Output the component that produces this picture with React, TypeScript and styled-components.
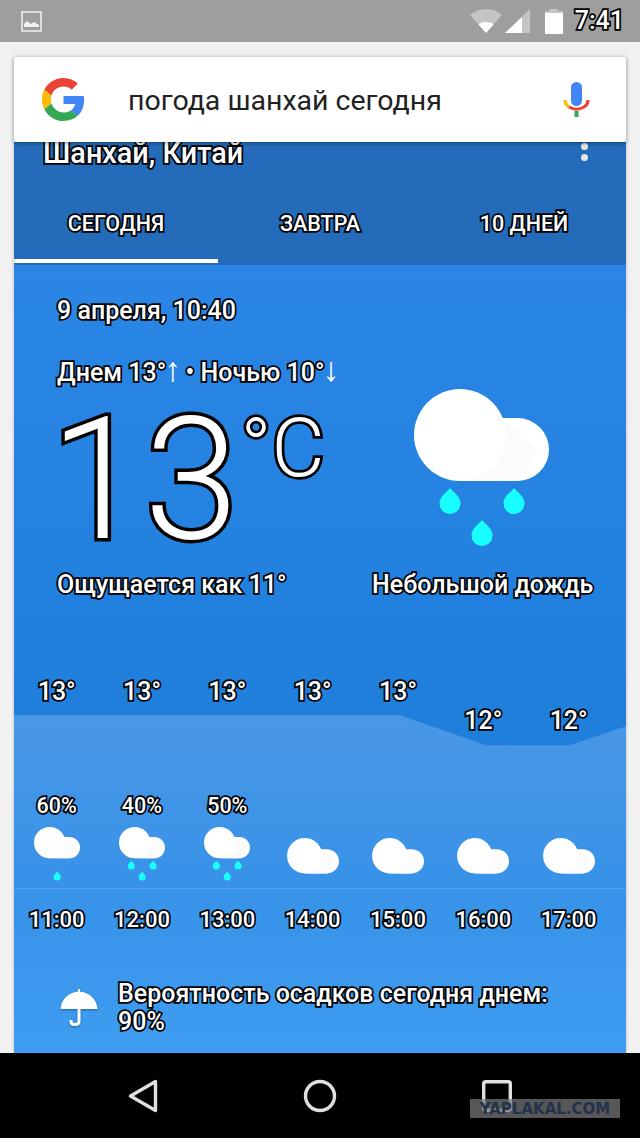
import styled, { createGlobalStyle, css } from "styled-components";

const hours = [
  { temp: 13, pop: "60%", drops: 1, time: "11:00" },
  { temp: 13, pop: "40%", drops: 3, time: "12:00" },
  { temp: 13, pop: "50%", drops: 3, time: "13:00" },
  { temp: 13, pop: "", drops: 0, time: "14:00" },
  { temp: 13, pop: "", drops: 0, time: "15:00" },
  { temp: 12, pop: "", drops: 0, time: "16:00" },
  { temp: 12, pop: "", drops: 0, time: "17:00" },
];

const GlobalStyle = createGlobalStyle`
  html, body {
    margin: 0;
    padding: 0;
    background: #f1f1f1;
  }
  * {
    box-sizing: border-box;
  }
`;

const outlined = css`
  color: #fff;
  -webkit-text-stroke: 3.5px #000;
  paint-order: stroke fill;
`;

const Phone = styled.div`
  width: 640px;
  height: 1138px;
  display: flex;
  flex-direction: column;
  overflow: hidden;
  position: relative;
  font-family: Roboto, "Noto Sans", sans-serif;
  background: #f1f1f1;
`;

const StatusBar = styled.div`
  height: 42px;
  flex: none;
  display: flex;
  align-items: center;
  padding: 0 16px 0 21px;
  background: #9e9e9e;
`;

const StatusIcons = styled.div`
  margin-left: auto;
  display: flex;
  align-items: center;
`;

const Clock = styled.span`
  ${outlined}
  margin-left: 12px;
  font-size: 25px;
  font-weight: 500;
  line-height: 30px;
`;

const SearchBar = styled.div`
  position: relative;
  z-index: 2;
  flex: none;
  height: 85px;
  margin: 15px 14px 0;
  display: flex;
  align-items: center;
  padding: 0 36px 0 28px;
  background: #fff;
  border-radius: 2px;
  box-shadow: 0 1px 4px rgba(0, 0, 0, 0.45);
`;

const Query = styled.span`
  margin: 2px 0 0 43px;
  font-size: 28.5px;
  color: #212121;
`;

const MicSlot = styled.div`
  margin-left: auto;
  display: flex;
`;

const Card = styled.main`
  flex: 1;
  margin: 0 14px;
  display: flex;
  flex-direction: column;
  min-height: 0;
  box-shadow: 0 0 3px rgba(0, 0, 0, 0.25);
`;

const Header = styled.header`
  flex: none;
  height: 123px;
  display: flex;
  flex-direction: column;
  background: #246cb9;
`;

const CityRow = styled.div`
  height: 54px;
  display: flex;
  align-items: flex-start;
  justify-content: space-between;
  padding: 0 38px 0 29px;
`;

const City = styled.span`
  ${outlined}
  margin-top: -5px;
  font-size: 28.8px;
  font-weight: 500;
  line-height: 32px;
`;

const Dots = styled.div`
  margin-top: -10px;
  display: flex;
  flex-direction: column;
  gap: 4px;
`;

const Dot = styled.i`
  width: 7px;
  height: 7px;
  border-radius: 50%;
  background: #e6e6e6;
`;

const Tabs = styled.nav`
  flex: 1;
  display: grid;
  grid-template-columns: repeat(3, 1fr);
`;

const Tab = styled.div<{ $active?: boolean }>`
  ${outlined}
  display: flex;
  align-items: center;
  justify-content: center;
  padding-bottom: 8px;
  font-size: 21.5px;
  font-weight: 500;
  border-bottom: 4px solid ${(p) => (p.$active ? "#fff" : "transparent")};
  margin-bottom: 2px;
`;

const Body = styled.section`
  flex: 1;
  display: flex;
  flex-direction: column;
  min-height: 0;
  overflow: hidden;
  background: linear-gradient(180deg, #2b86e6 0, #1f7fdb 450px);
`;

const Hero = styled.div`
  flex: none;
  height: 411px;
  padding: 31px 0 0 43px;
`;

const Line = styled.div`
  ${outlined}
  font-size: 25px;
  font-weight: 500;
  line-height: 30px;
  white-space: nowrap;
`;

const Arrow = styled.span`
  margin: 0 -2px;
  font-family: "Liberation Sans", sans-serif;
  font-size: 34px;
  font-weight: 400;
  line-height: 0;
  -webkit-text-stroke: 0;
`;

const HeroGrid = styled.div`
  margin-top: 32px;
  display: grid;
  grid-template-columns: 315px 1fr;
`;

const NowColumn = styled.div`
  display: flex;
  flex-direction: column;
`;

const BigTemp = styled.div`
  ${outlined}
  -webkit-text-stroke-width: 7px;
  display: flex;
  align-items: flex-start;
  height: 175px;
  margin: 7px 0 0 -7px;
  font-size: 170px;
  font-weight: 300;
  line-height: 170px;
`;

const Unit = styled.span`
  margin: 12px 0 0 2px;
  font-size: 82px;
  line-height: 82px;
  -webkit-text-stroke-width: 5.5px;
`;

const SkyColumn = styled.div`
  display: flex;
  flex-direction: column;
  align-items: flex-start;
  padding-top: 31px;
`;

const BigCloud = styled.div`
  margin: 0 0 11px 42px;
  display: flex;
`;

const Forecast = styled.div`
  position: relative;
  flex: 1;
  display: flex;
  flex-direction: column;
  min-height: 0;
`;

const ChartFill = styled.svg`
  position: absolute;
  inset: 0;
  width: 100%;
  height: 100%;
`;

const HourRow = styled.div`
  position: relative;
  display: grid;
  grid-template-columns: repeat(7, 85.33px);
  justify-items: center;
`;

const TempRow = styled(HourRow)`
  height: 113px;
  align-items: flex-start;
`;

const Temp = styled.span<{ $low: boolean }>`
  ${outlined}
  margin-top: ${(p) => (p.$low ? 30 : 1)}px;
  font-size: 25px;
  font-weight: 500;
  line-height: 30px;
`;

const PopRow = styled(HourRow)`
  height: 32px;
  align-items: center;
`;

const Pop = styled.span`
  ${outlined}
  font-size: 21.5px;
  font-weight: 500;
`;

const IconRow = styled(HourRow)`
  height: 67px;
  align-items: flex-start;
  padding-top: 6px;
`;

const IconCell = styled.div`
  height: 58px;
  display: flex;
  align-items: center;
`;

const TimeRow = styled(HourRow)`
  height: 62px;
  align-items: center;
  border-top: 1px solid rgba(255, 255, 255, 0.14);
`;

const Time = styled.span`
  ${outlined}
  font-size: 22px;
  font-weight: 500;
`;

const RainChance = styled.div`
  position: relative;
  margin-top: 30px;
  display: flex;
  align-items: center;
  padding: 0 40px 0 46px;
`;

const RainText = styled.div`
  ${outlined}
  margin-left: 20px;
  font-size: 25px;
  font-weight: 500;
  line-height: 28px;
`;

const NavBar = styled.footer`
  position: relative;
  flex: none;
  height: 85px;
  display: grid;
  grid-template-columns: repeat(3, 177px);
  justify-items: center;
  align-items: center;
  padding-left: 54px;
  background: #000;
`;

const Watermark = styled.div`
  position: absolute;
  left: 470px;
  top: 46px;
  width: 150px;
  height: 19px;
  display: flex;
  align-items: center;
  justify-content: center;
  background: rgba(120, 120, 120, 0.72);
  color: #22324d;
  font-family: "DejaVu Sans", sans-serif;
  font-size: 15px;
  font-weight: 700;
`;

const Cloud = ({ width, drops }: { width: number; drops: number }) => {
  const viewHeight = drops > 0 ? 170 : 92;
  return (
    <svg width={width} height={(width * viewHeight) / 135} viewBox={`0 0 135 ${viewHeight}`}>
      <path d="M46 92h57.500a31.500 31.500 0 0 0 0-63H80z" fill="#fff" />
      <path d="M86 29l38 32-20 31H56z" fill="#fbfbfb" />
      <circle cx="46" cy="46" r="46" fill="#fff" />
      {drops === 3 && (
        <>
          <Drop x={36} y={112} />
          <Drop x={100} y={112} />
        </>
      )}
      {drops > 0 && <Drop x={68} y={144} />}
    </svg>
  );
};

const Drop = ({ x, y }: { x: number; y: number }) => (
  <path
    transform={`translate(${x} ${y})`}
    d="M0-13C3-9 10.500-5 10.500 2.500a10.500 10.500 0 0 1-21 0C-10.500-5-3-9 0-13z"
    fill="#18ffff"
  />
);

const GoogleLogo = () => (
  <svg width="43" height="43" viewBox="0 0 48 48">
    <path fill="#EA4335" d="M24 9.500c3.540 0 6.710 1.220 9.210 3.600l6.850-6.850C35.900 2.380 30.470 0 24 0 14.620 0 6.510 5.380 2.560 13.220l7.980 6.190C12.430 13.720 17.740 9.500 24 9.500z" />
    <path fill="#4285F4" d="M46.980 24.550c0-1.570-.15-3.090-.38-4.550H24v9.020h12.940c-.58 2.960-2.260 5.480-4.780 7.180l7.730 6c4.510-4.180 7.090-10.360 7.090-17.650z" />
    <path fill="#FBBC05" d="M10.530 28.590c-.48-1.450-.76-2.990-.76-4.590s.27-3.140.76-4.590l-7.980-6.190C.92 16.460 0 20.120 0 24c0 3.880.92 7.540 2.560 10.780l7.970-6.190z" />
    <path fill="#34A853" d="M24 48c6.480 0 11.930-2.130 15.890-5.810l-7.730-6c-2.150 1.450-4.920 2.300-8.160 2.300-6.260 0-11.570-4.220-13.470-9.910l-7.980 6.190C6.510 42.620 14.620 48 24 48z" />
  </svg>
);

const MicIcon = () => (
  <svg width="27" height="36" viewBox="0 0 27 36">
    <rect x="8" y="0" width="11" height="24" rx="5.500" fill="#4285f4" />
    <path d="M2 18c0 3 1.500 5.500 4 7" fill="none" stroke="#fbbc05" strokeWidth="3.200" />
    <path d="M6 25c4.500 2.700 10.500 2.700 15 0 2.500-1.500 4-4 4-7" fill="none" stroke="#ea4335" strokeWidth="3.200" />
    <rect x="11.500" y="29" width="4" height="6" fill="#34a853" />
  </svg>
);

const ImageIcon = () => (
  <svg width="21" height="21" viewBox="0 0 21 21">
    <rect x="1" y="1" width="19" height="19" fill="none" stroke="#f2f2f2" strokeWidth="1.500" />
    <path d="M3 16v-3l3-3 4 3 3-2 5 3v2z" fill="#f2f2f2" />
  </svg>
);

const WifiIcon = () => (
  <svg width="32" height="24" viewBox="0 0 32 24">
    <path d="M0 6C9-2 23-2 32 6L16 24z" fill="#c4c4c4" />
    <path d="M8.500 15.500c4.500-3.200 10.500-3.200 15 0L16 24z" fill="#fff" />
  </svg>
);

const SignalIcon = () => (
  <svg width="25" height="24" viewBox="0 0 25 24" style={{ marginLeft: 3 }}>
    <path d="M25 0v24H0z" fill="#c4c4c4" />
    <path d="M17 8v16H0z" fill="#fff" />
  </svg>
);

const BatteryIcon = () => (
  <svg width="18" height="25" viewBox="0 0 18 25" style={{ marginLeft: 15 }}>
    <path d="M5 0h8v2h5v3H0V2h5z" fill="#c4c4c4" />
    <rect x="0" y="4" width="18" height="21" fill="#fff" />
  </svg>
);

const Umbrella = () => (
  <svg width="38" height="38" viewBox="0 0 38 38" style={{ filter: "drop-shadow(0 1px 1px rgba(0,0,0,.35))" }}>
    <path d="M18 0h2v2.500C30 3.500 37 11 37.500 20h-37C1 11 8 3.500 18 2.500z" fill="#fff" />
    <path d="M19 20v12.500c0 4-8 4-8 0v-1.500" fill="none" stroke="#fff" strokeWidth="3" />
  </svg>
);

const BackIcon = () => (
  <svg width="30" height="34" viewBox="0 0 30 34">
    <path d="M27.500 2.500v29L2.500 17z" fill="none" stroke="#e0e0e0" strokeWidth="3.400" strokeLinejoin="round" />
  </svg>
);

const HomeIcon = () => (
  <svg width="34" height="34" viewBox="0 0 34 34">
    <circle cx="17" cy="17" r="14.500" fill="none" stroke="#e0e0e0" strokeWidth="3.400" />
  </svg>
);

const RecentIcon = () => (
  <svg width="30" height="32" viewBox="0 0 30 32">
    <rect x="1.700" y="1.700" width="26.600" height="28.600" rx="2" fill="none" stroke="#e0e0e0" strokeWidth="3.400" />
  </svg>
);

const App = () => {
  return (
    <Phone>
      <GlobalStyle />
      <StatusBar>
        <ImageIcon />
        <StatusIcons>
          <WifiIcon />
          <SignalIcon />
          <BatteryIcon />
          <Clock>7:41</Clock>
        </StatusIcons>
      </StatusBar>

      <SearchBar>
        <GoogleLogo />
        <Query>погода шанхай сегодня</Query>
        <MicSlot>
          <MicIcon />
        </MicSlot>
      </SearchBar>

      <Card>
        <Header>
          <CityRow>
            <City>Шанхай, Китай</City>
            <Dots>
              <Dot />
              <Dot />
              <Dot />
            </Dots>
          </CityRow>
          <Tabs>
            <Tab $active>СЕГОДНЯ</Tab>
            <Tab>ЗАВТРА</Tab>
            <Tab>10 ДНЕЙ</Tab>
          </Tabs>
        </Header>

        <Body>
          <Hero>
            <Line>9 апреля, 10:40</Line>
            <HeroGrid>
              <NowColumn>
                <Line>
                  Днем 13°<Arrow>↑</Arrow> • Ночью 10°<Arrow>↓</Arrow>
                </Line>
                <BigTemp>
                  13<Unit>°C</Unit>
                </BigTemp>
                <Line>Ощущается как 11°</Line>
              </NowColumn>
              <SkyColumn>
                <BigCloud>
                  <Cloud width={135} drops={3} />
                </BigCloud>
                <Line>Небольшой дождь</Line>
              </SkyColumn>
            </HeroGrid>
          </Hero>

          <Forecast>
            <ChartFill viewBox="0 0 611 376" preserveAspectRatio="none">
              <defs>
                <linearGradient id="chartFill" x1="0" y1="0" x2="0" y2="1">
                  <stop offset="0" stopColor="#4a97e6" />
                  <stop offset="0.5" stopColor="#3792e8" />
                  <stop offset="1" stopColor="#3e9df0" />
                </linearGradient>
              </defs>
              <path d="M0 39H385L471 69H555L611 50V376H0z" fill="url(#chartFill)" />
            </ChartFill>
            <TempRow>
              {hours.map((h) => (
                <Temp key={h.time} $low={h.temp < 13}>
                  {h.temp}°
                </Temp>
              ))}
            </TempRow>
            <PopRow>
              {hours.map((h) => (
                <Pop key={h.time}>{h.pop}</Pop>
              ))}
            </PopRow>
            <IconRow>
              {hours.map((h) => (
                <IconCell key={h.time}>
                  <Cloud width={h.drops > 0 ? 46 : 52} drops={h.drops} />
                </IconCell>
              ))}
            </IconRow>
            <TimeRow>
              {hours.map((h) => (
                <Time key={h.time}>{h.time}</Time>
              ))}
            </TimeRow>
            <RainChance>
              <Umbrella />
              <RainText>
                Вероятность осадков сегодня днем:
                <br />
                90%
              </RainText>
            </RainChance>
          </Forecast>
        </Body>
      </Card>

      <NavBar>
        <BackIcon />
        <HomeIcon />
        <RecentIcon />
        <Watermark>YAPLAKAL.COM</Watermark>
      </NavBar>
    </Phone>
  );
};

export default App;
